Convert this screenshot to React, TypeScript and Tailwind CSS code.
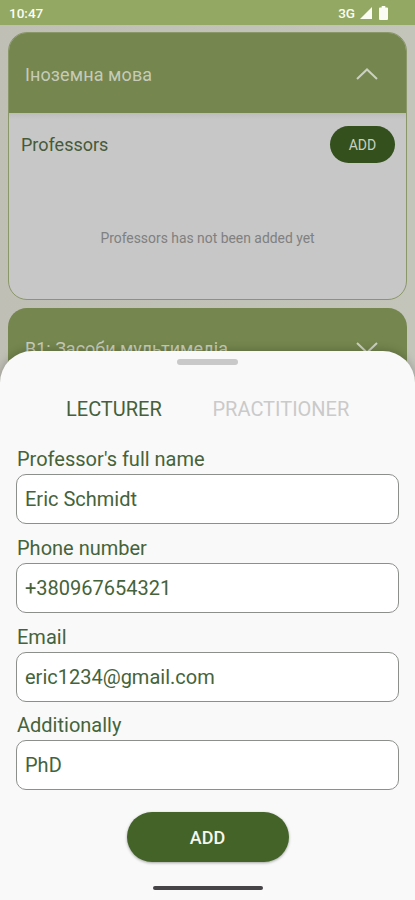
const fields = [
  { label: "Professor's full name", value: "Eric Schmidt" },
  { label: "Phone number", value: "+380967654321" },
  { label: "Email", value: "eric1234@gmail.com" },
  { label: "Additionally", value: "PhD" },
];

function Chevron({ down = false }: { down?: boolean }) {
  return (
    <svg
      className={down ? "h-3 w-[22px] rotate-180" : "mt-px h-3 w-[22px]"}
      viewBox="0 0 22 12"
      fill="none"
      stroke="#cbd0c0"
      strokeWidth="2"
    >
      <path d="M1 11 11 1.500 21 11" />
    </svg>
  );
}

function StatusBar() {
  return (
    <div className="flex h-[25px] items-center justify-between bg-[#93a963] pr-[27px] pl-[9px] text-[13.500px] font-medium text-[#fbfdf5]">
      <span className="pt-0.5">10:47</span>
      <div className="flex items-center pt-px">
        <span className="mr-[5px] -ml-px">3G</span>
        <svg className="mr-[7px] h-3 w-3" viewBox="0 0 12 12" fill="currentColor">
          <path d="M12 0v12H0z" />
        </svg>
        <svg className="h-[14px] w-[9px]" viewBox="0 0 9 14" fill="currentColor">
          <path d="M2.7 0h3.6v1.500H8a1 1 0 0 1 1 1V13a1 1 0 0 1-1 1H1a1 1 0 0 1-1-1V2.500a1 1 0 0 1 1-1h1.700z" />
        </svg>
      </div>
    </div>
  );
}

export default function App() {
  return (
    <div className="relative h-[900px] w-full overflow-hidden bg-linear-to-r from-[#bfbfb6] to-[#c3c4ba] font-[Roboto,sans-serif]">
      <StatusBar />
      <main className="flex flex-col gap-2 px-2 pt-[7px]">
        <section className="h-[268px] overflow-hidden rounded-[19px] border-x-[1.500px] border-y border-[#8a9768] bg-[#c7c7c7]">
          <header className="flex h-20 items-center justify-between bg-[#75864e] pr-7 pl-4">
            <h2 className="pt-[3px] text-[18px] tracking-[0.1px] text-[#c6cbb9]">Іноземна мова</h2>
            <Chevron />
          </header>
          <div className="flex h-[62px] items-center justify-between bg-linear-to-b from-[#bcbcbc] to-[#c7c7c7] to-10% pr-[11px] pl-3">
            <h3 className="text-[18px] text-[#465a3a]">Professors</h3>
            <button className="h-[37px] w-[65px] rounded-full bg-[#33501d] pt-0.5 text-[14px] text-[#c9d0c2]">
              ADD
            </button>
          </div>
          <p className="pt-[53px] text-center text-[13.900px] text-[#808080]">
            Professors has not been added yet
          </p>
        </section>
        <section className="h-[120px] rounded-[19px] bg-[#75864e]">
          <header className="flex h-20 items-center justify-between pr-[29px] pl-[17px]">
            <h2 className="text-[18px] text-[#c6cbb9]">В1: Засоби мультимедіа</h2>
            <Chevron down />
          </header>
        </section>
      </main>
      <div className="absolute inset-x-0 top-[351px] bottom-0 flex flex-col items-center rounded-t-[32px] bg-[#f9f9f9] px-4 shadow-[0_0_10px_rgba(0,0,0,0.25)]">
        <div className="mt-2 h-1.5 w-[61px] rounded-full bg-[#c9c9c9]" />
        <div className="mt-[30px] flex h-7 w-full items-center pl-[50px] text-[20px]">
          <span className="w-[146.500px] text-[#45603a]">LECTURER</span>
          <span className="text-[#cacaca]">PRACTITIONER</span>
        </div>
        <form className="mt-[22px] flex w-full flex-col gap-[9.800px]">
          {fields.map((f) => (
            <label key={f.label} className="flex h-[79px] flex-col text-[20px] text-[#45633a]">
              <span className="h-[29px] pl-px leading-[28px]">{f.label}</span>
              <span className="flex h-[50px] items-center rounded-[10px] border border-[#8b908a] bg-white pl-2">
                {f.value}
              </span>
            </label>
          ))}
        </form>
        <button className="mt-[22px] h-[50px] w-[162px] shrink-0 rounded-full bg-[#436329] text-[18px] font-medium text-[#f3f7ef] shadow-[0_1px_3px_rgba(0,0,0,0.35)]">
          ADD
        </button>
        <div className="mt-6 h-[3.500px] w-[110px] shrink-0 rounded-full bg-[#464446]" />
      </div>
    </div>
  );
}
